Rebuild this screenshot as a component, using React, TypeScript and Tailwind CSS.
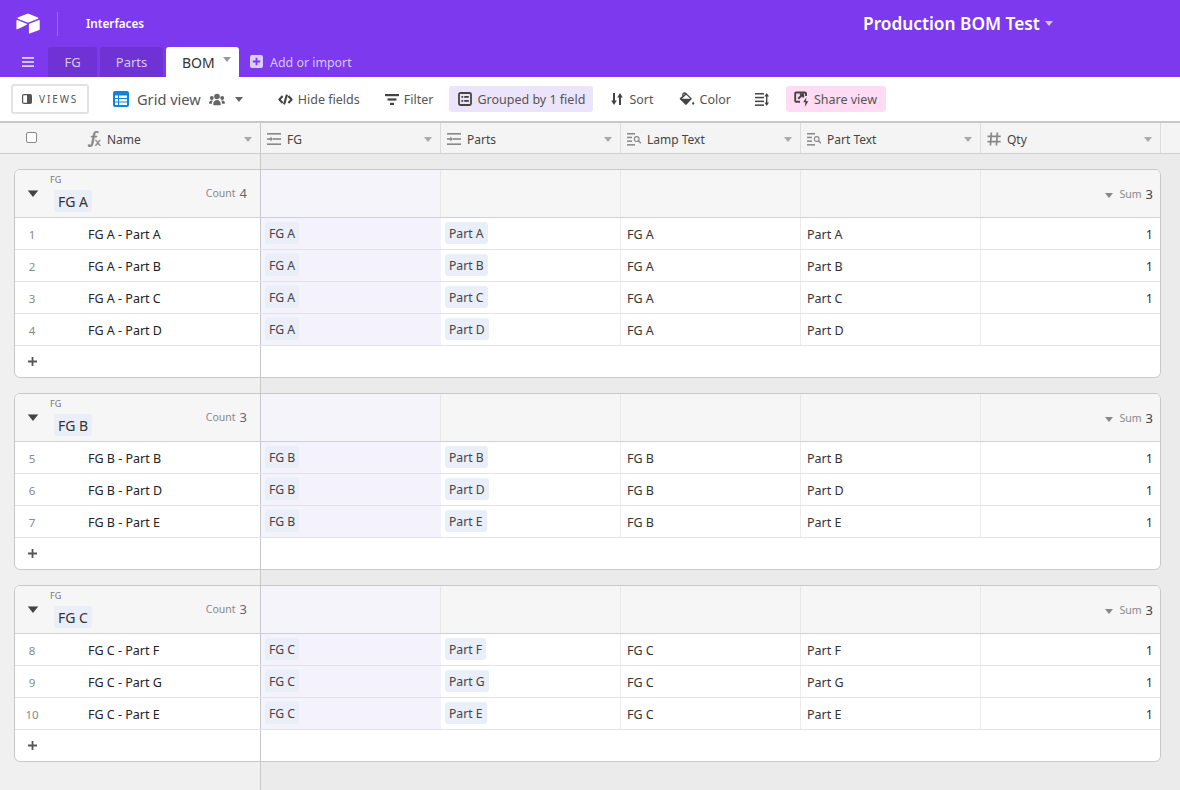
const FONT = "font-['Noto_Sans','Open_Sans',sans-serif]";

function Caret({ className = "" }: { className?: string }) {
  return (
    <svg width="8" height="5" viewBox="0 0 8 5" className={className}>
      <path d="M0 0h8L4 5z" fill="currentColor" />
    </svg>
  );
}

function Logo() {
  return (
    <svg width="24" height="21" viewBox="0 0 24 21" className="text-white">
      <path d="M10.6 1 1.8 4.6c-.5.2-.5.9 0 1.1l8.9 3.5c.8.3 1.7.3 2.4 0l8.9-3.5c.5-.2.5-.9 0-1.1L13.2 1c-.8-.4-1.8-.4-2.6 0z" fill="currentColor" />
      <path d="M12.9 11.4v8.7c0 .4.4.7.8.5l9.6-3.7c.3-.1.4-.3.4-.6V7.6c0-.4-.4-.7-.8-.5l-9.6 3.7c-.2.1-.4.3-.4.6z" fill="currentColor" />
      <path d="m10.7 11.8-3 1.4-.3.2-6.1 2.9c-.4.2-.9-.1-.9-.5V7.7c0-.2.1-.3.2-.4l.3-.2c.2-.1.4-.1.5 0l9.2 3.7c.5.2.5.8.1 1z" fill="currentColor" />
    </svg>
  );
}

function GridIcon() {
  return (
    <svg width="16" height="16" viewBox="0 0 16 16" className="text-[#1283da]">
      <rect x="0" y="0" width="16" height="16" rx="2" fill="currentColor" />
      <g fill="#fff">
        <rect x="2" y="4.5" width="3" height="2.5" />
        <rect x="6" y="4.5" width="8" height="2.5" />
        <rect x="2" y="8" width="3" height="2.5" />
        <rect x="6" y="8" width="8" height="2.5" />
        <rect x="2" y="11.5" width="3" height="2.5" />
        <rect x="6" y="11.5" width="8" height="2.5" />
      </g>
    </svg>
  );
}

function TeamIcon() {
  return (
    <svg width="16" height="13" viewBox="0 0 16 12" className="text-[#666]">
      <g fill="currentColor">
        <circle cx="8" cy="3" r="2.8" />
        <circle cx="2.8" cy="4.4" r="2" />
        <circle cx="13.2" cy="4.4" r="2" />
        <path d="M4.2 11c0-2.6 1.6-4.4 3.8-4.4s3.8 1.8 3.8 4.4c0 .4-.3.7-.7.7H4.9c-.4 0-.7-.3-.7-.7z" />
        <path d="M0 9.4C0 8 1.2 7 2.8 7c.4 0 .7 0 1 .2-.6.9-.9 1.9-.9 3H.8c-.5 0-.8-.3-.8-.8zM16 9.4C16 8 14.8 7 13.2 7c-.4 0-.7 0-1 .2.6.9.9 1.9.9 3h2.1c.5 0 .8-.3.8-.8z" />
      </g>
    </svg>
  );
}

function HideIcon() {
  return (
    <svg width="15" height="11" viewBox="0 0 15 11" fill="none" stroke="#444" strokeWidth="2.1" strokeLinejoin="round">
      <path d="M4.6 2 1.4 5.5 4.6 9" />
      <path d="M10.4 2l3.2 3.5L10.4 9" />
      <path d="M9 .6 6 10.4" />
    </svg>
  );
}

function FilterIcon() {
  return (
    <svg width="14" height="11" viewBox="0 0 14 11" fill="#444">
      <rect x="0" y="0" width="14" height="2.2" />
      <rect x="2.5" y="4.4" width="9" height="2.2" />
      <rect x="5" y="8.8" width="4" height="2.2" />
    </svg>
  );
}

function GroupIcon() {
  return (
    <svg width="14" height="14" viewBox="0 0 14 14">
      <rect x="1" y="1" width="12" height="12" rx="1.5" fill="none" stroke="#444" strokeWidth="1.8" />
      <g fill="#444">
        <rect x="3.4" y="4" width="1.8" height="1.8" />
        <rect x="6.2" y="4" width="4.6" height="1.8" />
        <rect x="3.4" y="8" width="1.8" height="1.8" />
        <rect x="6.2" y="8" width="4.6" height="1.8" />
      </g>
    </svg>
  );
}

function SortIcon() {
  return (
    <svg width="12" height="12" viewBox="0 0 12 12" fill="#444">
      <path d="M2 0h2v7.5h1.8L3 12 .2 7.5H2z" />
      <path d="M8 12h2V4.5h1.8L9 0 6.2 4.5H8z" />
    </svg>
  );
}

function ColorIcon() {
  return (
    <svg width="16" height="14" viewBox="0 0 16 14">
      <path d="M7.2 1 13 6.8 7.6 12.6c-.4.4-1 .4-1.4 0L1 7.3c-.4-.4-.4-1 0-1.4z" fill="#444" />
      <path d="M7.2 2.8 2.8 6.7h8.6z" fill="#fff" />
      <path d="M3.8 4.6V2.8c0-1 .8-1.8 1.7-1.8.8 0 1.3.3 1.7.8" fill="none" stroke="#444" strokeWidth="1.3" />
      <path d="M14.2 9.4c-.6.9-1.1 1.6-1.1 2.2 0 .6.5 1.1 1.1 1.1s1.1-.5 1.1-1.1c0-.6-.5-1.3-1.1-2.2z" fill="#444" />
    </svg>
  );
}

function RowHeightIcon() {
  return (
    <svg width="14" height="13" viewBox="0 0 14 13" fill="#444">
      <rect x="0" y="0" width="9" height="1.5" />
      <rect x="0" y="3.8" width="9" height="1.5" />
      <rect x="0" y="7.6" width="9" height="1.5" />
      <rect x="0" y="11.4" width="9" height="1.5" />
      <path d="M11 3h1.4v7H11z" />
      <path d="M11.7 0 14 3.4H9.4zM11.7 13 14 9.6H9.4z" />
    </svg>
  );
}

function ShareIcon() {
  return (
    <svg width="16" height="16" viewBox="0 0 16 16" fill="none" stroke="#444" strokeWidth="1.9">
      <path d="M5 1.5H2.2a1 1 0 0 0-1 1v7.3a1 1 0 0 0 1 1H6" />
      <path d="M5 1.5h6a1 1 0 0 1 1 1V5" />
      <path d="M4.2 7.8 9 3.2M5.8 3.2h3.4v3.4" />
      <path d="M12.3 6.4 9.2 11.2h2.2l-.6 4.6 3.6-5.6H12z" fill="#444" stroke="none" />
    </svg>
  );
}

function FieldIcon({ kind }: { kind: string }) {
  if (kind === "fx") {
    return (
      <svg width="15" height="16" viewBox="0 0 15 16" fill="#888" stroke="#888" strokeWidth=".5">
        <path d="M9.6 0C7.8 0 6.8 1 6.4 3L5.9 5H4.2L4 6.2h1.7L4.4 12.4c-.2 1-.6 1.7-1.2 1.7-.3 0-.4-.2-.6-.6H1.3L1 14.9c.3.6 1 1 1.8 1 1.9 0 3-1.2 3.4-3.2L7.6 6.2h2.1L9.9 5H7.8l.4-1.9c.2-1 .5-1.8 1.1-1.8.3 0 .5.2.6.6h1.2l.3-1.4C10.9.2 10.3 0 9.6 0z" />
        <path d="m9.5 9.2 1.3 1.7 1.4-1.7h1.3l-2.1 2.6 2.2 2.7h-1.4l-1.4-1.8-1.4 1.8H8.1l2.2-2.7-2.1-2.6z" />
      </svg>
    );
  }
  if (kind === "link") {
    return (
      <svg width="14" height="12" viewBox="0 0 14 12" fill="#888">
        <rect x="0" y="0" width="14" height="1.6" />
        <rect x="6" y="5.2" width="8" height="1.6" />
        <rect x="0" y="10.4" width="14" height="1.6" />
        <rect x="0" y="5.2" width="4.5" height="1.6" />
        <path d="M3.4 3.6 6 6 3.4 8.4z" />
      </svg>
    );
  }
  if (kind === "lookup") {
    return (
      <svg width="15" height="13" viewBox="0 0 15 13" fill="#888">
        <rect x="0" y="0" width="8" height="1.5" />
        <rect x="0" y="3.7" width="5" height="1.5" />
        <rect x="0" y="7.4" width="5" height="1.5" />
        <rect x="0" y="11.1" width="8" height="1.5" />
        <circle cx="9.7" cy="6" r="2.4" fill="none" stroke="#888" strokeWidth="1.1" />
        <path d="m11.4 7.8 2.5 2.4" stroke="#888" strokeWidth="1.4" />
      </svg>
    );
  }
  return (
    <svg width="14" height="14" viewBox="0 0 14 14" fill="none" stroke="#888" strokeWidth="1.7">
      <path d="M4.4 0.5 3.4 13.5M10.4 0.5 9.4 13.5M0.5 4.4h13.2M0.5 9.6h13.2" />
    </svg>
  );
}

const COLUMNS = [
  { name: "FG", icon: "link" },
  { name: "Parts", icon: "link" },
  { name: "Lamp Text", icon: "lookup" },
  { name: "Part Text", icon: "lookup" },
  { name: "Qty", icon: "num" },
];

const GROUPS = [
  {
    key: "FG A",
    count: 4,
    sum: 3,
    rows: [
      { n: 1, part: "Part A", qty: true },
      { n: 2, part: "Part B", qty: true },
      { n: 3, part: "Part C", qty: true },
      { n: 4, part: "Part D", qty: false },
    ],
  },
  {
    key: "FG B",
    count: 3,
    sum: 3,
    rows: [
      { n: 5, part: "Part B", qty: true },
      { n: 6, part: "Part D", qty: true },
      { n: 7, part: "Part E", qty: true },
    ],
  },
  {
    key: "FG C",
    count: 3,
    sum: 3,
    rows: [
      { n: 8, part: "Part F", qty: true },
      { n: 9, part: "Part G", qty: true },
      { n: 10, part: "Part E", qty: true },
    ],
  },
];

function Chip({ children }: { children: string }) {
  return (
    <span className="rounded-[3px] bg-[#e9eef9] px-[4px] h-[22px] leading-[24px] text-[12.2px] text-[#444] whitespace-nowrap">
      {children}
    </span>
  );
}

function Group({ g }: { g: (typeof GROUPS)[number] }) {
  return (
    <div className="w-[1147px] ml-[14px] rounded-[6px] border border-[#c8c8c8] bg-white overflow-hidden">
      <div className="flex h-[48px] bg-[#f6f6f6] border-b border-[#cfcfd4]">
        <div className="w-[246px] shrink-0 border-r border-[#c8c8c8] flex">
          <div className="w-[35px] flex items-center justify-center">
            <Caret className="text-[#444] scale-[1.35]" />
          </div>
          <div className="flex-1 flex flex-col">
            <div className="h-[20px] pt-[4px] text-[9px] leading-[12px] text-[#777]">FG</div>
            <div className="ml-[4px] w-fit h-[22px] rounded-[3px] bg-[#e9eef9] px-[4px] text-[14px] leading-[24px] text-[#333]">
              {g.key}
            </div>
          </div>
          <div className="flex items-center pr-[13px] pt-[1px] gap-[4px]">
            <span className="text-[10.5px] text-[#888]">Count</span>
            <span className="text-[13px] text-[#666]">{g.count}</span>
          </div>
        </div>
        {[0, 1, 2, 3].map((i) => (
          <div key={i} className={`w-[180px] shrink-0 border-r border-[#e8e8e8] ${i === 0 ? "bg-[#f5f4fa]" : ""}`} />
        ))}
        <div className="flex-1 flex items-center justify-end gap-[4px] pr-[7px] pt-[3px]">
          <Caret className="text-[#888] mr-[2px]" />
          <span className="text-[10.5px] text-[#888]">Sum</span>
          <span className="text-[13px] text-[#444]">{g.sum}</span>
        </div>
      </div>
      {g.rows.map((r) => (
        <div key={r.n} className="flex h-[32px] border-b border-[#e3e3e3] text-[12.5px]">
          <div className="w-[246px] shrink-0 border-r border-[#c8c8c8] flex items-center">
            <div className="w-[34px] pt-[2px] text-center text-[11.5px] text-[#888]">{r.n}</div>
            <div className="pl-[39px] pt-[4px] text-[#222]">{`${g.key} - ${r.part}`}</div>
          </div>
          <div className="w-[180px] shrink-0 bg-[#f4f2fc] flex items-center pl-[4px] pb-[1px]">
            <Chip>{g.key}</Chip>
          </div>
          <div className="w-[180px] shrink-0 border-r border-[#ececec] flex items-center pl-[4px] pb-[1px]">
            <Chip>{r.part}</Chip>
          </div>
          <div className="w-[180px] shrink-0 border-r border-[#ececec] flex items-center pl-[6px] pt-[4px] text-[#333]">{g.key}</div>
          <div className="w-[180px] shrink-0 border-r border-[#ececec] flex items-center pl-[6px] pt-[4px] text-[#333]">{r.part}</div>
          <div className="flex-1 flex items-center justify-end pr-[7px] pt-[4px] text-[#333]">{r.qty ? "1" : ""}</div>
        </div>
      ))}
      <div className="flex h-[31px]">
        <div className="w-[246px] shrink-0 border-r border-[#c8c8c8] flex items-center pl-[13px]">
          <svg width="9" height="9" viewBox="0 0 9 9" fill="#555">
            <path d="M3.6 0h1.8v3.6H9v1.8H5.4V9H3.6V5.4H0V3.6h3.6z" />
          </svg>
        </div>
      </div>
    </div>
  );
}

export default function App() {
  return (
    <div className={`${FONT} w-[1180px] h-[790px] overflow-hidden flex flex-col`}>
      <div className="h-[77px] bg-[#7c39ed] flex flex-col shrink-0">
        <div className="h-[47px] flex items-center">
          <div className="ml-[16px]">
            <Logo />
          </div>
          <div className="ml-[17px] w-px h-[24px] bg-white/25" />
          <div className="ml-[28px] w-[60px] text-[11.7px] font-semibold text-white whitespace-nowrap">Interfaces</div>
          <div className="ml-[717px] flex items-center gap-[5px]">
            <span className="text-[17.3px] font-semibold text-white whitespace-nowrap">Production BOM Test</span>
            <Caret className="text-white/70" />
          </div>
        </div>
        <div className="h-[30px] flex items-end">
          <div className="w-[48px] h-full flex items-center pl-[22px]">
            <svg width="12" height="10" viewBox="0 0 12 10" fill="#ddd0fb">
              <rect y="0" width="12" height="1.8" />
              <rect y="4.1" width="12" height="1.8" />
              <rect y="8.2" width="12" height="1.8" />
            </svg>
          </div>
          <div className="w-[49px] h-full rounded-t-[3px] bg-[#6f33d5] text-[13px] leading-[31px] text-center text-[#d9c9f9]">FG</div>
          <div className="ml-[3px] w-[63px] h-full rounded-t-[3px] bg-[#6f33d5] text-[13px] leading-[31px] text-center text-[#d9c9f9]">Parts</div>
          <div className="ml-[3px] w-[73px] h-full rounded-t-[3px] bg-white flex items-center pl-[16px] gap-[8px]">
            <span className="text-[14px] text-[#333]">BOM</span>
            <Caret className="text-[#999] mb-[5px]" />
          </div>
          <div className="ml-[11px] h-full flex items-center gap-[7px] pb-[1px]">
            <svg width="13" height="13" viewBox="0 0 13 13">
              <rect width="13" height="13" rx="2" fill="#dccdfa" />
              <path d="M5.6 2.8h1.8v2.8h2.8v1.8H7.4v2.8H5.6V7.4H2.8V5.6h2.8z" fill="#7c39ed" />
            </svg>
            <span className="pt-[4px] text-[12.4px] text-[#d9c9f9]">Add or import</span>
          </div>
        </div>
      </div>

      <div className="h-[46px] shrink-0 bg-white border-b-2 border-[#c8c8c8] flex items-center text-[12.5px] text-[#555]">
        <div className="ml-[11px] w-[78px] h-[30px] rounded-[3px] border-2 border-[#e2e2e2] flex items-center pl-[9px] gap-[7px]">
          <svg width="10" height="10" viewBox="0 0 10 10">
            <rect x=".6" y=".6" width="8.8" height="8.8" rx="1.5" fill="none" stroke="#555" strokeWidth="1.2" />
            <rect x="5" y=".6" width="4.4" height="8.8" fill="#555" />
          </svg>
          <span className="pt-[1px] text-[10px] tracking-[1.9px] text-[#555]">VIEWS</span>
        </div>
        <div className="ml-[24px]"><GridIcon /></div>
        <span className="ml-[8px] pt-[2px] text-[14.6px] text-[#555]">Grid view</span>
        <div className="ml-[8px]"><TeamIcon /></div>
        <Caret className="ml-[10px] text-[#666]" />
        <div className="ml-[35px]"><HideIcon /></div>
        <span className="ml-[5px] pt-[2px]">Hide fields</span>
        <div className="ml-[25px]"><FilterIcon /></div>
        <span className="ml-[5px] pt-[2px]">Filter</span>
        <div className="ml-[16px] h-[26px] w-[144px] rounded-[3px] bg-[#ece4fb] flex items-center pl-[9px] gap-[5px] whitespace-nowrap">
          <GroupIcon />
          <span className="pt-[2px]">Grouped by 1 field</span>
        </div>
        <div className="ml-[18px]"><SortIcon /></div>
        <span className="ml-[6px] pt-[2px]">Sort</span>
        <div className="ml-[25px]"><ColorIcon /></div>
        <span className="ml-[5px] pt-[2px]">Color</span>
        <div className="ml-[24px]"><RowHeightIcon /></div>
        <div className="ml-[17px] h-[26px] w-[100px] rounded-[3px] bg-[#ffdcf3] flex items-center pl-[8px] gap-[4px] whitespace-nowrap">
          <ShareIcon />
          <span className="pt-[2px]">Share view</span>
        </div>
      </div>

      <div className="h-[31px] shrink-0 bg-[#f4f4f4] border-b border-[#cfcfcf] flex text-[12px] text-[#444]">
        <div className="w-[261px] shrink-0 border-r border-[#c8c8c8] flex items-center pt-[2px]">
          <div className="ml-[26px] w-[11px] h-[11px] rounded-[2px] border border-[#888] bg-white mb-[4px]" />
          <div className="ml-[50px]"><FieldIcon kind="fx" /></div>
          <span className="ml-[5px] pt-[2px] flex-1">Name</span>
          <Caret className="mr-[8px] text-[#aaa]" />
        </div>
        {COLUMNS.map((c) => (
          <div key={c.name} className="w-[180px] shrink-0 border-r border-[#dcdcdc] flex items-center pl-[6px] pt-[2px]">
            <FieldIcon kind={c.icon} />
            <span className={`${c.icon === "lookup" ? "ml-[5px]" : "ml-[6px]"} pt-[2px] flex-1`}>{c.name}</span>
            <Caret className="mr-[8px] text-[#aaa]" />
          </div>
        ))}
      </div>

      <div className="flex-1 flex flex-col gap-[15px] pt-[15px] bg-[linear-gradient(to_right,#f0f0f0_260px,#c8c8c8_260px,#c8c8c8_261px,#ebebeb_261px)]">
        {GROUPS.map((g) => (
          <Group key={g.key} g={g} />
        ))}
      </div>
    </div>
  );
}
